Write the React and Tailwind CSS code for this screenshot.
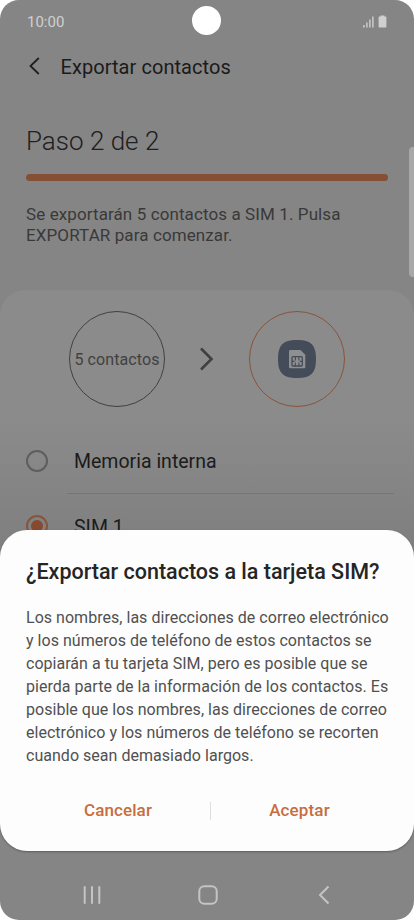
import React from "react";

function StatusBar() {
  return (
    <div className="flex h-[42px] shrink-0 items-center justify-between pt-px pr-[26px] pl-[27px] text-[#d0d0d0]">
      <span className="text-[15px] leading-5">10:00</span>
      <svg width="26" height="14" viewBox="0 0 26 14" fill="#d0d0d0">
        <rect x="1.2" y="10" width="1.4" height="2.5" />
        <rect x="4.2" y="7.5" width="1.4" height="5" />
        <rect x="7.2" y="4.5" width="1.4" height="8" />
        <rect x="10.2" y="1.5" width="1.4" height="11" />
        <path d="M18.600 .500h3.800v1h1.300q.7 0 .7.7v9.600q0 .7-.7.7h-6.400q-.7 0-.7-.7V2.200q0-.7.7-.7h1.300z" />
      </svg>
    </div>
  );
}

function SimIcon() {
  return (
    <svg width="38" height="38" viewBox="0 0 38 38">
      <path d="M19 0C33 0 38 5 38 19S33 38 19 38 0 33 0 19 5 0 19 0Z" fill="#434c58" />
      <path d="M12.300 10h10.200l4.800 4.800v12.200q0 1.300-1.300 1.300H12.300q-1.300 0-1.300-1.300V11.300Q11 10 12.300 10Z" fill="#8d8f91" />
      <rect x="14" y="16.700" width="10.300" height="9.300" rx="1" fill="none" stroke="#434c58" strokeWidth="1.300" />
      <path d="M17.400 17v3.500M20.900 17v3.500M17.400 22.500v3.500M20.900 22.500v3.500M14 21.400h2.600M21.700 21.400h2.600" fill="none" stroke="#434c58" strokeWidth="1.100" />
    </svg>
  );
}

function NavBar() {
  return (
    <div className="grid h-[69px] grid-cols-[20px_1fr_14px] items-center pt-[19px] pr-[83px] pl-[82px]">
      <svg width="20" height="20" viewBox="0 0 20 20" stroke="#c4c4c4" strokeWidth="2" strokeLinecap="round">
        <path d="M2.700 2v16M10 2v16M17.300 2v16" />
      </svg>
      <svg className="ml-[96px]" width="20" height="20" viewBox="0 0 20 20" fill="none" stroke="#c4c4c4" strokeWidth="2">
        <rect x="1.300" y="1.300" width="17.400" height="17.400" rx="5" />
      </svg>
      <svg width="14" height="20" viewBox="0 0 14 20" fill="none" stroke="#c4c4c4" strokeWidth="2">
        <path d="M11.500 1.500L3 10l8.500 8.500" />
      </svg>
    </div>
  );
}

export default function App() {
  return (
    <div className="h-[920px] w-[414px] overflow-hidden bg-white font-['Roboto',sans-serif]">
      <div className="relative flex h-[920px] flex-col overflow-hidden rounded-[19px] bg-[#858585]">
        <StatusBar />
        <div className="absolute top-[6px] left-[192px] h-[29px] w-[29px] rounded-full bg-white" />
        <div className="absolute top-[147px] right-0 h-[130px] w-[5px] rounded-l-[4px] bg-[#a8a8a8]" />

        <header className="flex h-12 shrink-0 items-center pl-[28px]">
          <svg width="13" height="18" viewBox="0 0 13 18" fill="none" stroke="#202020" strokeWidth="1.800">
            <path d="M10.800 1L2.500 9l8.300 8" />
          </svg>
          <h1 className="mt-[2px] ml-[19.500px] text-[20px] leading-6 tracking-[0.060px] text-[#1b1b1b]">Exportar contactos</h1>
        </header>

        <section className="h-[200px] shrink-0 px-[26px] pt-[35px]">
          <h2 className="text-[26px] leading-8 font-light text-[#202020]">Paso 2 de 2</h2>
          <div className="mt-[17px] h-[7px] w-[362px] rounded-full bg-[#844f35]" />
          <p className="mt-[23px] text-[17px] leading-[21px] tracking-[0.100px] text-[#393939]">
            Se exportarán 5 contactos a SIM 1. Pulsa<br />EXPORTAR para comenzar.
          </p>
        </section>

        <section className="h-[290px] shrink-0 rounded-t-[26px] bg-linear-to-b from-[#8b8b8b] from-45% to-[#808080] to-85% pt-[21px]">
          <div className="flex items-center pl-[69px]">
            <div className="flex size-24 items-center justify-center rounded-full border border-[#414141] pt-[2px] text-[16px] tracking-[0.100px] whitespace-nowrap text-[#414141]">5 contactos</div>
            <svg className="ml-[34px]" width="16" height="24" viewBox="0 0 16 24" fill="none" stroke="#404040" strokeWidth="2.600">
              <path d="M2 1.500L12.500 12 2 22.500" />
            </svg>
            <div className="ml-[34px] flex size-24 items-center justify-center rounded-full border border-[#87543c]"><SimIcon /></div>
          </div>
          <div className="mt-[22px] ml-[26px] flex h-16 items-center">
            <span className="size-[22px] rounded-full border-2 border-[#5e5e5e]" />
            <span className="mt-[2px] ml-[26px] text-[19.500px] text-[#1b1b1b]">Memoria interna</span>
          </div>
          <div className="mr-[20px] ml-[67px] h-px bg-[#757575]" />
          <div className="ml-[26px] flex h-16 items-center">
            <span className="flex size-[22px] items-center justify-center rounded-full border-2 border-[#87543c]"><span className="size-3 rounded-full bg-[#87492f]" /></span>
            <span className="mt-[3px] ml-[26px] text-[19.500px] text-[#1b1b1b]">SIM 1</span>
          </div>
        </section>

        <div className="absolute inset-x-0 top-[530px] flex h-[321px] flex-col rounded-[27px] bg-[#fdfdfd] px-[26px] pt-[28px] shadow-[0_1px_2px_rgba(0,0,0,0.3)]">
          <h3 className="text-[21.500px] leading-7 font-medium whitespace-nowrap text-[#252525]">¿Exportar contactos a la tarjeta SIM?</h3>
          <p className="mt-[20px] text-[16px] leading-[23px] tracking-[0.030px] whitespace-nowrap text-[#505050]">
            Los nombres, las direcciones de correo electrónico<br />
            y los números de teléfono de estos contactos se<br />
            copiarán a tu tarjeta SIM, pero es posible que se<br />
            pierda parte de la información de los contactos. Es<br />
            posible que los nombres, las direcciones de correo<br />
            electrónico y los números de teléfono se recorten<br />
            cuando sean demasiado largos.
          </p>
          <div className="mt-[31px] flex h-[25px] items-center text-[17px] font-medium text-[#c76d3e]">
            <button className="w-[184px] tracking-[0.100px]">Cancelar</button>
            <span className="h-[18px] w-px bg-[#dedede]" />
            <button className="w-[177px] tracking-[0.150px]">Aceptar</button>
          </div>
        </div>
        <div className="mt-auto"><NavBar /></div>
      </div>
    </div>
  );
}
